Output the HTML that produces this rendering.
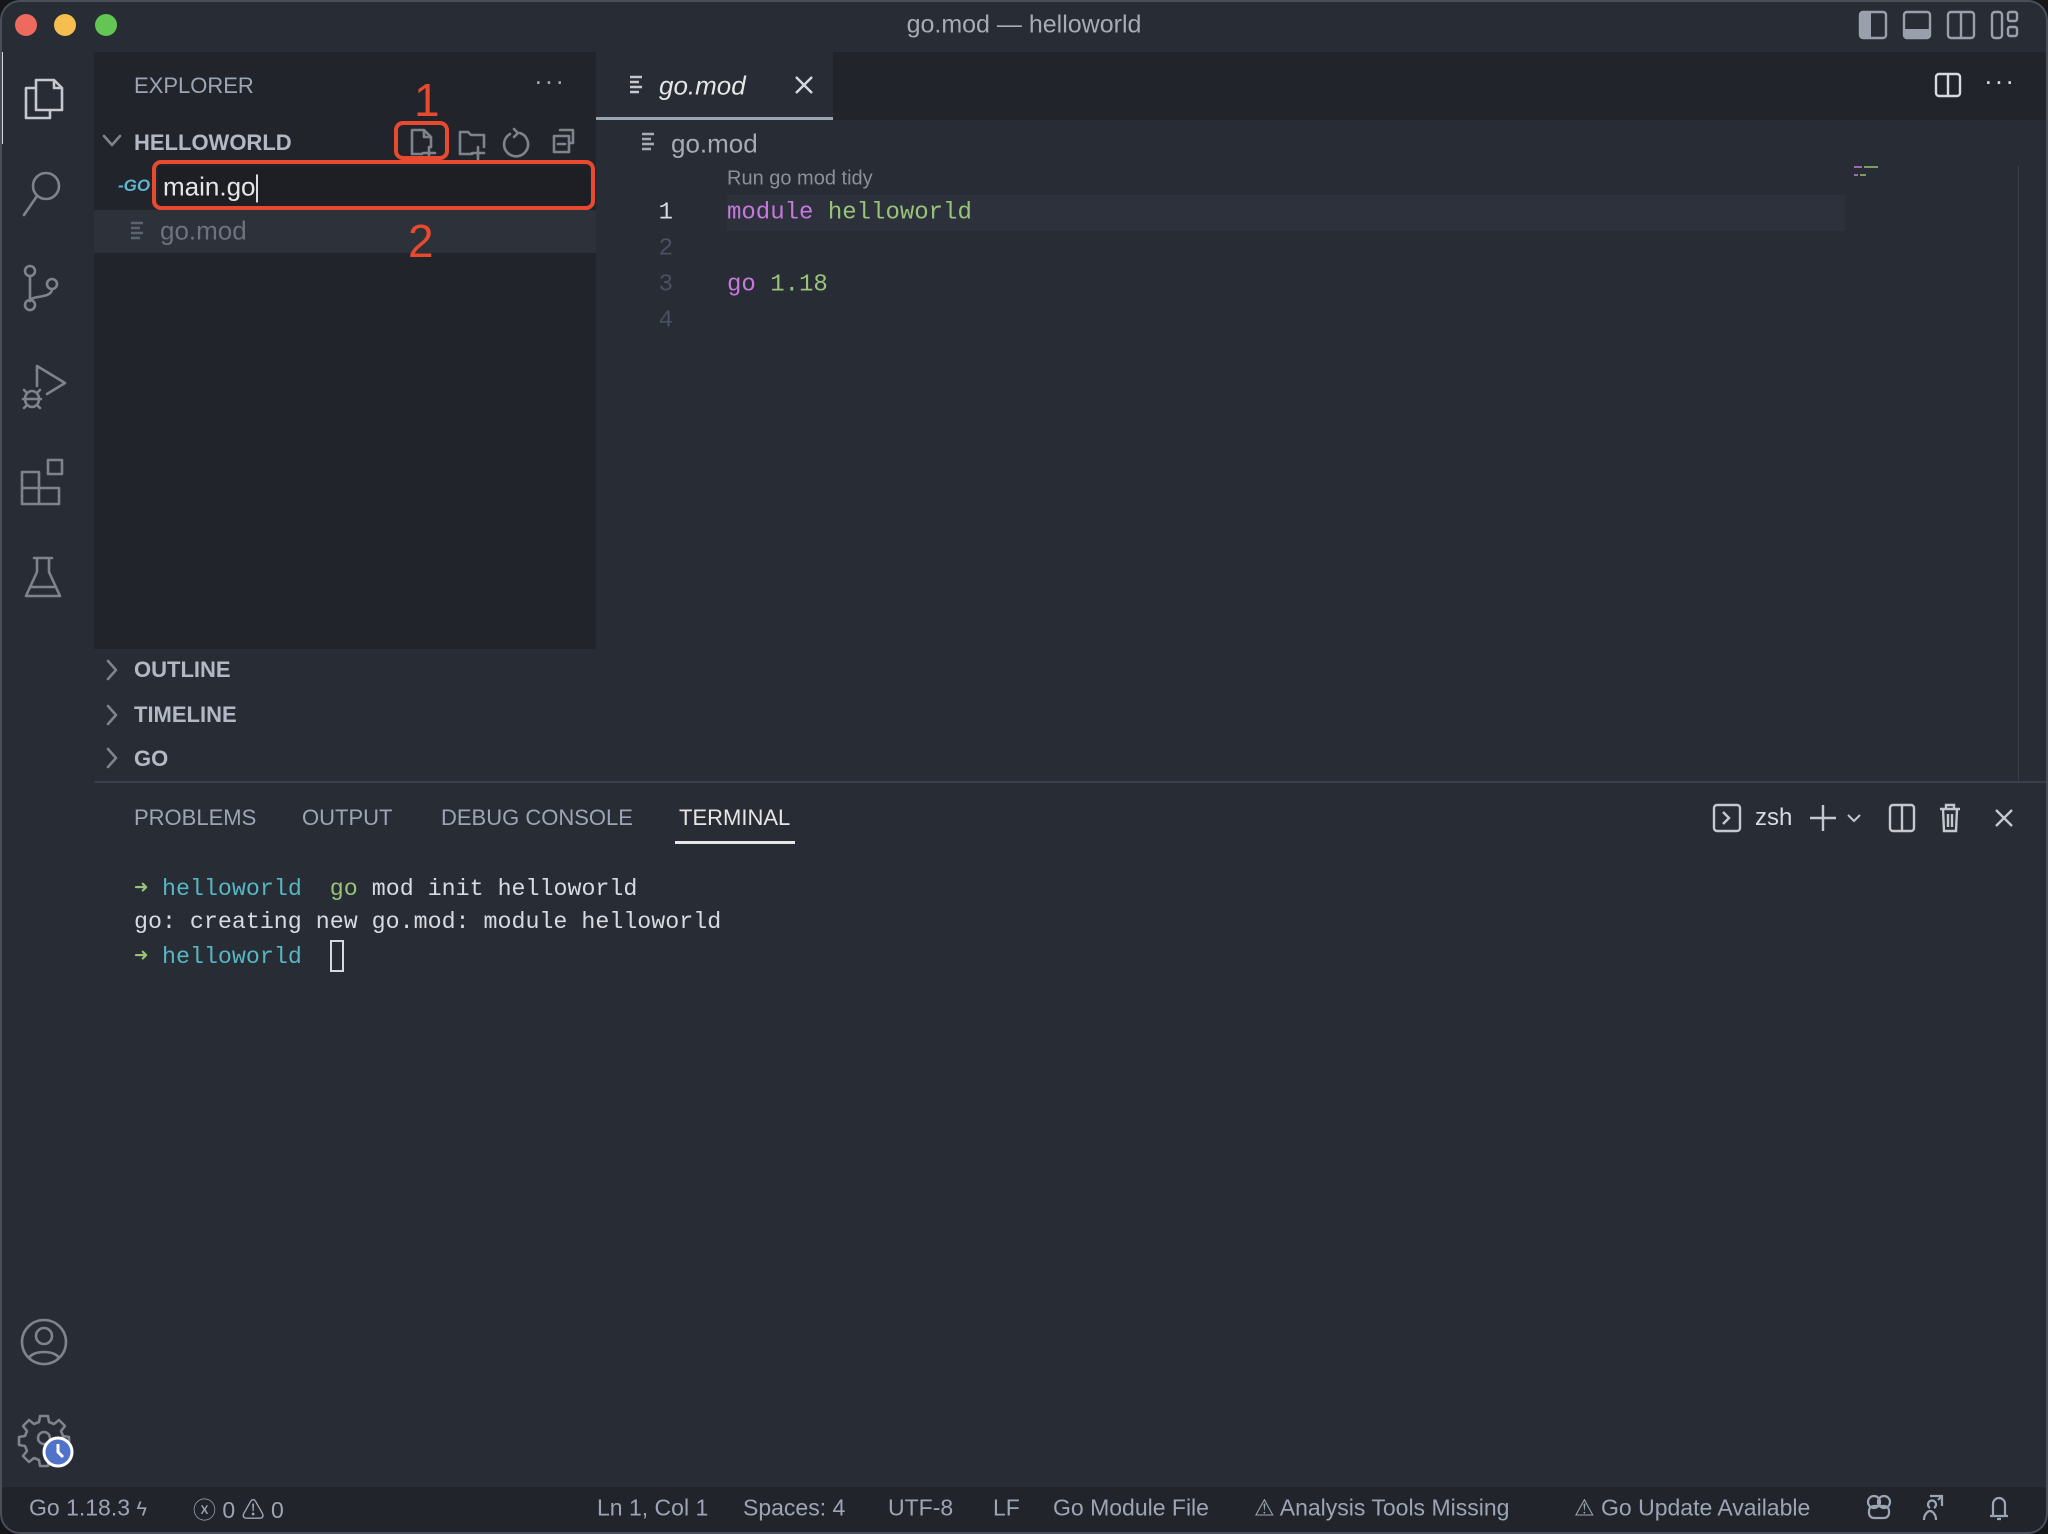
<!DOCTYPE html>
<html><head><meta charset="utf-8">
<style>
*{margin:0;padding:0;box-sizing:border-box}
html,body{width:2048px;height:1534px;overflow:hidden;background:#15161a}
#win{position:absolute;left:0;top:0;width:2048px;height:1534px;background:#282c34;border-radius:20px;overflow:hidden;font-family:"Liberation Sans",sans-serif;color:#9da5b4}
#edge{position:absolute;left:0;top:0;width:2048px;height:1534px;border-radius:20px;border:2px solid #4a4e57;pointer-events:none}
.a{position:absolute;white-space:pre}
.mono{font-family:"Liberation Mono",monospace}
.c{transform:translateY(-50%)}
svg{position:absolute;overflow:visible}
.ic{fill:none;stroke:#7e838c;stroke-width:2.6;stroke-linecap:round;stroke-linejoin:round}
.il{fill:none;stroke:#c5c8ce;stroke-width:2.6;stroke-linecap:round;stroke-linejoin:round}
</style></head><body><div id="win">
<div class="a" style="left:0;top:0;width:2048px;height:52px;background:#282c34"></div>
<div class="a" style="left:15px;top:14px;width:22px;height:22px;border-radius:50%;background:#ee6a5f"></div>
<div class="a" style="left:54px;top:14px;width:22px;height:22px;border-radius:50%;background:#f5be4f"></div>
<div class="a" style="left:95px;top:14px;width:22px;height:22px;border-radius:50%;background:#62c554"></div>
<div class="a c" style="left:0;width:2048px;text-align:center;top:25px;font-size:25px;color:#a6abb4">go.mod — helloworld</div>
<svg style="left:1858px;top:12px" width="180" height="28">
<rect x="2" y="0" width="26" height="26" rx="3" fill="none" stroke="#9aa0ab" stroke-width="2.4"/><rect x="2" y="0" width="11" height="26" fill="#9aa0ab"/>
<rect x="46" y="0" width="26" height="26" rx="3" fill="none" stroke="#9aa0ab" stroke-width="2.4"/><rect x="46" y="17" width="26" height="9" fill="#9aa0ab"/>
<rect x="90" y="0" width="26" height="26" rx="3" fill="none" stroke="#9aa0ab" stroke-width="2.4"/><line x1="103" y1="0" x2="103" y2="26" stroke="#9aa0ab" stroke-width="2.4"/>
<rect x="134" y="0" width="10" height="26" rx="3" fill="none" stroke="#9aa0ab" stroke-width="2.4"/><rect x="150" y="0" width="9" height="9" rx="2" fill="none" stroke="#9aa0ab" stroke-width="2.4"/><rect x="150" y="15" width="9" height="9" rx="2" fill="none" stroke="#9aa0ab" stroke-width="2.4"/>
</svg>
<div class="a" style="left:0;top:52px;width:94px;height:1436px;background:#282c34"></div>
<div class="a" style="left:0;top:52px;width:3px;height:92px;background:#d7dae0"></div>
<svg style="left:22px;top:74px" width="44" height="46"><path class="il" d="M14 6h18l8 8v22H14z M32 6v8h8 M14 14H4v30h24v-8"/></svg>
<svg style="left:20px;top:170px" width="48" height="48"><circle class="ic" cx="26" cy="16" r="13"/><line class="ic" x1="17" y1="26" x2="4" y2="45"/></svg>
<svg style="left:22px;top:264px" width="44" height="50"><circle class="ic" cx="8" cy="7" r="5"/><circle class="ic" cx="8" cy="41" r="5"/><circle class="ic" cx="30" cy="20" r="5"/><path class="ic" d="M8 12v24 M30 25c0 10-22 6-22 12"/></svg>
<svg style="left:20px;top:362px" width="50" height="50"><path class="ic" d="M17 4v20 M17 4l28 17-18 11"/><ellipse class="ic" cx="12" cy="37" rx="7" ry="8"/><path class="ic" d="M3 37h18 M4 28l3 3 M20 28l-3 3 M4 46l3-3 M20 46l-3-3"/></svg>
<svg style="left:20px;top:458px" width="50" height="50"><path class="ic" d="M2 14h17v32H2z M2 30h37v16H19 M19 14v16 M28 2h14v14H28z"/></svg>
<svg style="left:24px;top:556px" width="44" height="46"><path class="ic" d="M10 2h18 M13 2v14L2 40h34L25 16V2 M6 31h26"/></svg>
<svg style="left:20px;top:1318px" width="50" height="50"><circle class="ic" cx="24" cy="24" r="22"/><circle class="ic" cx="24" cy="18" r="8"/><path class="ic" d="M9 40c4-8 26-8 30 0"/></svg>
<svg style="left:20px;top:1414px" width="54" height="54"><path class="ic" d="M20 2h8l1 6 5 2 5-4 6 6-4 5 2 5 6 1v8l-6 1-2 5 4 5-6 6-5-4-5 2-1 6h-8l-1-6-5-2-5 4-6-6 4-5-2-5-6-1v-8l6-1 2-5-4-5 6-6 5 4 5-2z"/><circle class="ic" cx="24" cy="24" r="6"/><circle cx="38" cy="38" r="14" fill="#4f73c8" stroke="#fff" stroke-width="3"/><path d="M38 30v8l5 5" stroke="#fff" stroke-width="3" fill="none"/></svg>
<div class="a" style="left:94px;top:52px;width:502px;height:597px;background:#21252b"></div>
<div class="a c" style="left:134px;top:86px;font-size:22px;color:#9da5b4">EXPLORER</div>
<div class="a c" style="left:534px;top:81px;font-size:26px;color:#9da5b4;letter-spacing:2px">···</div>
<svg style="left:102px;top:134px" width="20" height="14"><path class="ic" d="M2 2l8 9 8-9" stroke="#9da5b4"/></svg>
<div class="a c" style="left:134px;top:143px;font-size:22px;font-weight:bold;color:#b3b9c4">HELLOWORLD</div>
<svg style="left:410px;top:128px" width="200" height="32">
<path class="ic" d="M2 2h12l7 7v10 M14 2v7h7 M2 2v24h10 M19 19v12 M13 25h12" stroke="#a6abb4"/>
<path class="ic" d="M50 4h8l3 3h13v12 M50 4v22h12 M68 19v12 M62 25h12" stroke="#a6abb4"/>
<path class="ic" d="M100 6a12 12 0 1 0 10-1 M104 1l4 4-4 4" stroke="#a6abb4"/>
<path class="ic" d="M150 2h13v13h-4 M144 8h15v16h-15z M148 16h7" stroke="#a6abb4"/>
</svg>
<div class="a" style="left:394px;top:121px;width:55px;height:39px;border:4px solid #e84a2f;border-radius:9px"></div>
<div class="a c" style="left:414px;top:100px;font-size:46px;color:#e84a2f">1</div>
<div class="a c" style="left:118px;top:186px;font-size:17px;font-weight:bold;font-style:italic;color:#5fb5d2">-GO</div>
<div class="a" style="left:158px;top:166px;width:432px;height:40px;background:#1d1f24"></div>
<div class="a c" style="left:163px;top:187px;font-size:26px;color:#e6e6e6">main.go<span style="display:inline-block;width:2px;height:28px;background:#ddd;vertical-align:middle"></span></div>
<div class="a" style="left:152px;top:160px;width:443px;height:50px;border:4px solid #e84a2f;border-radius:9px"></div>
<div class="a" style="left:94px;top:210px;width:502px;height:43px;background:#2c313a"></div>
<svg style="left:130px;top:221px" width="16" height="20"><path d="M1 2h12M1 7h9M1 12h12M1 17h9" stroke="#5c6370" stroke-width="2.4"/></svg>
<div class="a c" style="left:160px;top:231px;font-size:26px;color:#6d737e">go.mod</div>
<div class="a c" style="left:408px;top:241px;font-size:46px;color:#e84a2f">2</div>
<svg style="left:106px;top:659px" width="12" height="22"><path class="ic" d="M2 2l8 9-8 9" stroke="#9da5b4"/></svg>
<div class="a c" style="left:134px;top:670px;font-size:22px;font-weight:bold;color:#b3b9c4">OUTLINE</div>
<svg style="left:106px;top:704px" width="12" height="22"><path class="ic" d="M2 2l8 9-8 9" stroke="#9da5b4"/></svg>
<div class="a c" style="left:134px;top:715px;font-size:22px;font-weight:bold;color:#b3b9c4">TIMELINE</div>
<svg style="left:106px;top:747px" width="12" height="22"><path class="ic" d="M2 2l8 9-8 9" stroke="#9da5b4"/></svg>
<div class="a c" style="left:134px;top:759px;font-size:22px;font-weight:bold;color:#b3b9c4">GO</div>
<div class="a" style="left:596px;top:52px;width:1452px;height:68px;background:#21252b"></div>
<div class="a" style="left:596px;top:52px;width:237px;height:68px;background:#282c34;border-bottom:3px solid #9da5b4"></div>
<svg style="left:629px;top:75px" width="16" height="20"><path d="M1 2h12M1 7h9M1 12h12M1 17h9" stroke="#c5c8ce" stroke-width="2.4"/></svg>
<div class="a c" style="left:659px;top:86px;font-size:26px;font-style:italic;color:#e6e6e6">go.mod</div>
<svg style="left:795px;top:76px" width="18" height="18"><path d="M1 1l16 16M17 1L1 17" stroke="#d7dae0" stroke-width="2.4"/></svg>
<svg style="left:1935px;top:73px" width="26" height="24"><rect x="1" y="1" width="24" height="22" rx="3" fill="none" stroke="#d7dae0" stroke-width="2.4"/><line x1="13" y1="1" x2="13" y2="23" stroke="#d7dae0" stroke-width="2.4"/></svg>
<div class="a c" style="left:1984px;top:81px;font-size:26px;color:#d7dae0;letter-spacing:2px">···</div>
<svg style="left:641px;top:132px" width="16" height="20"><path d="M1 2h12M1 7h9M1 12h12M1 17h9" stroke="#a6abb4" stroke-width="2.4"/></svg>
<div class="a c" style="left:671px;top:144px;font-size:26px;color:#a6abb4">go.mod</div>
<div class="a c" style="left:727px;top:179px;font-size:20px;color:#8b919a">Run go mod tidy</div>
<div class="a" style="left:727px;top:195px;width:1118px;height:36px;background:#2c313c"></div>
<div class="a mono c" style="left:638px;width:35px;text-align:right;top:213px;font-size:24px;color:#d7dae0">1</div>
<div class="a mono c" style="left:638px;width:35px;text-align:right;top:249px;font-size:24px;color:#495162">2</div>
<div class="a mono c" style="left:638px;width:35px;text-align:right;top:285px;font-size:24px;color:#495162">3</div>
<div class="a mono c" style="left:638px;width:35px;text-align:right;top:321px;font-size:24px;color:#495162">4</div>
<div class="a mono c" style="left:727px;top:213px;font-size:24px;color:#c678dd">module <span style="color:#98c379">helloworld</span></div>
<div class="a mono c" style="left:727px;top:285px;font-size:24px;color:#c678dd">go <span style="color:#98c379">1.18</span></div>
<div class="a" style="left:1854px;top:166px;width:8px;height:2px;background:#9b6ab0"></div>
<div class="a" style="left:1864px;top:166px;width:14px;height:2px;background:#7f9a62"></div>
<div class="a" style="left:1854px;top:174px;width:4px;height:2px;background:#9b6ab0"></div>
<div class="a" style="left:1860px;top:174px;width:6px;height:2px;background:#7f9a62"></div>
<div class="a" style="left:2018px;top:166px;width:1px;height:616px;background:#3a3f48"></div>
<div class="a" style="left:94px;top:781px;width:1954px;height:2px;background:#3a3f4b"></div>
<div class="a c" style="left:134px;top:818px;font-size:22px;color:#9da5b4">PROBLEMS</div>
<div class="a c" style="left:302px;top:818px;font-size:22px;color:#9da5b4">OUTPUT</div>
<div class="a c" style="left:441px;top:818px;font-size:22px;color:#9da5b4">DEBUG CONSOLE</div>
<div class="a c" style="left:679px;top:818px;font-size:22px;color:#e6e6e6">TERMINAL</div>
<div class="a" style="left:675px;top:841px;width:120px;height:3px;background:#e6e6e6"></div>
<svg style="left:1712px;top:803px" width="320" height="30">
<rect x="2" y="2" width="26" height="26" rx="3" fill="none" stroke="#c5c8ce" stroke-width="2.4"/><path d="M11 9l6 6-6 6" fill="none" stroke="#c5c8ce" stroke-width="2.4"/>
<path d="M98 15h26M111 2v26" stroke="#c5c8ce" stroke-width="2.4"/><path d="M136 12l6 6 6-6" fill="none" stroke="#c5c8ce" stroke-width="2"/>
<rect x="178" y="2" width="24" height="26" rx="3" fill="none" stroke="#c5c8ce" stroke-width="2.4"/><line x1="190" y1="2" x2="190" y2="28" stroke="#c5c8ce" stroke-width="2.4"/>
<path d="M228 6h20M234 6V2h8v4M231 6l1 22h12l1-22M236 11v13M240 11v13" fill="none" stroke="#c5c8ce" stroke-width="2.4"/>
<path d="M284 7l16 16M300 7l-16 16" stroke="#c5c8ce" stroke-width="2.4"/>
</svg>
<div class="a c" style="left:1755px;top:818px;font-size:24px;color:#d7dae0">zsh</div>
<div class="a mono c" style="left:134px;top:888px;font-size:23.3px;color:#d7dae0"><span style="color:#98c379">➜</span> <span style="color:#56b6c2">helloworld</span>  <span style="color:#98c379">go</span> mod init helloworld</div>
<div class="a mono c" style="left:134px;top:922px;font-size:23.3px;color:#d7dae0">go: creating new go.mod: module helloworld</div>
<div class="a mono c" style="left:134px;top:956px;font-size:23.3px;color:#d7dae0"><span style="color:#98c379">➜</span> <span style="color:#56b6c2">helloworld</span></div>
<div class="a" style="left:330px;top:940px;width:14px;height:32px;border:2px solid #d7dae0"></div>
<div class="a" style="left:0;top:1487px;width:2048px;height:47px;background:#21252b"></div>
<div class="a c" style="left:29px;top:1508px;font-size:23px;color:#9da5b4">Go 1.18.3 <span style="font-size:20px">ϟ</span></div>
<div class="a c" style="left:193px;top:1508px;font-size:23px;color:#9da5b4">ⓧ 0 ⚠ 0</div>
<div class="a c" style="left:597px;top:1508px;font-size:23px;color:#9da5b4">Ln 1, Col 1</div>
<div class="a c" style="left:743px;top:1508px;font-size:23px;color:#9da5b4">Spaces: 4</div>
<div class="a c" style="left:888px;top:1508px;font-size:23px;color:#9da5b4">UTF-8</div>
<div class="a c" style="left:993px;top:1508px;font-size:23px;color:#9da5b4">LF</div>
<div class="a c" style="left:1053px;top:1508px;font-size:23px;color:#9da5b4">Go Module File</div>
<div class="a c" style="left:1254px;top:1508px;font-size:23px;color:#9da5b4">⚠ Analysis Tools Missing</div>
<div class="a c" style="left:1574px;top:1508px;font-size:23px;color:#9da5b4">⚠ Go Update Available</div>
<svg style="left:1866px;top:1492px" width="150" height="30">
<circle cx="8" cy="10" r="6" fill="none" stroke="#9da5b4" stroke-width="2.2"/><circle cx="18" cy="10" r="6" fill="none" stroke="#9da5b4" stroke-width="2.2"/><rect x="3" y="14" width="20" height="12" rx="5" fill="none" stroke="#9da5b4" stroke-width="2.2"/>
<path d="M64 4h12v10M72 8l4-4M68 16a4 4 0 1 0-4 0M58 28c0-6 4-9 6-9s6 3 6 9" fill="none" stroke="#9da5b4" stroke-width="2.2"/>
<path d="M124 24h18M127 24V12a6 6 0 0 1 12 0v12M131 27h4" fill="none" stroke="#9da5b4" stroke-width="2.2"/>
</svg>
<div id="edge"></div>
</div></body></html>
